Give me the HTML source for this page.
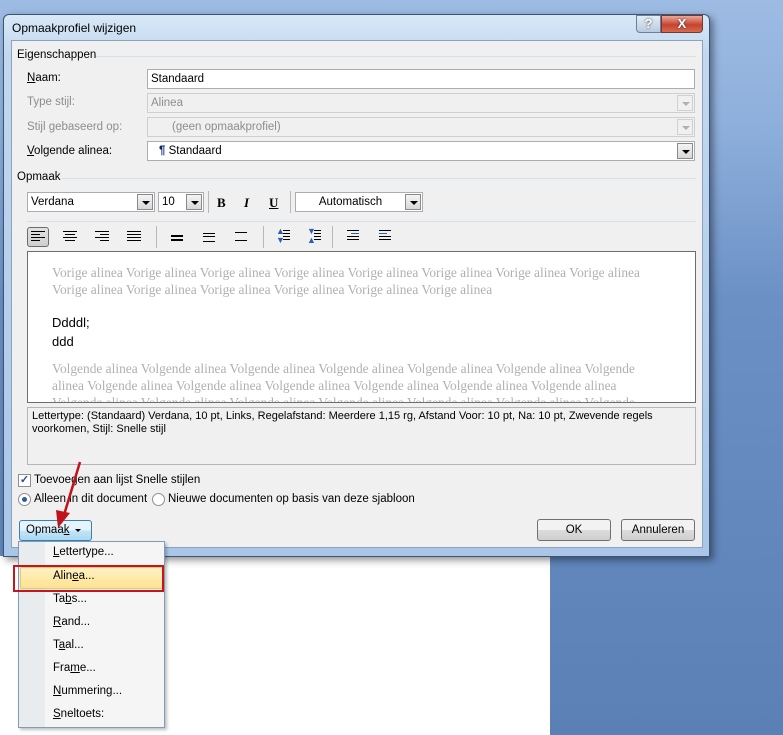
<!DOCTYPE html>
<html><head><meta charset="utf-8"><style>
*{box-sizing:border-box;margin:0;padding:0}
body{width:783px;height:735px;overflow:hidden;position:relative;font-family:"Liberation Sans",sans-serif;font-size:11.5px;color:#000;background:#5a80b6}
.a{position:absolute}
.t{position:absolute;white-space:nowrap}
.inp{position:absolute;background:#fff;border:1px solid #abadb3;height:20px;padding:3px 3px 0;white-space:nowrap}
.dis{background:#f0f0f0;border-color:#cfcfcf;color:#8d8d8d}
.dd{position:absolute;top:1px;right:1px;width:16px;height:16px;background:linear-gradient(#f4f4f4,#d8d8d8);border:1px solid #8a8a8a}
.dd:after{content:"";position:absolute;left:4px;top:6px;border-left:4px solid transparent;border-right:4px solid transparent;border-top:4px solid #000}
.dis .dd{background:#f0f0f0;border-color:#d0d0d0}
.dis .dd:after{border-top-color:#b0b0b0}
.g{color:#8d8d8d}
.btn{position:absolute;height:22px;border:1px solid #707070;border-radius:3px;background:linear-gradient(#f2f2f2 50%,#dcdcdc 50%,#cfcfcf);text-align:center;line-height:20px}
.al{position:absolute;width:14px}
.al i{display:block;height:1px;background:#000;margin-bottom:2px}
.sep{position:absolute;width:1px;background:#b8b8b8}
.pv{font-family:"Liberation Serif",serif;font-size:13.4px;color:#b0b0b0;line-height:17px}
.mi{position:absolute;left:53px;white-space:nowrap}
u{text-decoration:underline}
</style></head><body>
<div class="a" style="left:0;top:0;width:783px;height:735px;background:linear-gradient(180deg,#9dbbe3 0,#8fb0dc 120px,#6b90c5 300px,#5a80b6 735px)"></div>
<div class="a" style="left:0;top:556px;width:550px;height:179px;background:#fff"></div>
<div class="a" style="left:3px;top:14px;width:707px;height:543px;border-radius:6px 6px 0 0;background:linear-gradient(180deg,#d8e8f7,#c2d8ef 40px,#a9c6e8);border:1px solid #3d5573;box-shadow:3px 3px 8px rgba(0,0,0,.45)"></div>
<div class="t" style="left:12px;top:21px;font-size:12px">Opmaakprofiel wijzigen</div>
<div class="a" style="left:636px;top:15px;width:25px;height:18px;border:1px solid #6d7f96;border-radius:0 0 0 4px;background:linear-gradient(#e4edf7,#b9cadf);text-align:center;font-weight:bold;color:#fff;text-shadow:0 0 2px #333;font-size:13px;line-height:16px">?</div>
<div class="a" style="left:661px;top:15px;width:42px;height:18px;border:1px solid #6d3a3a;border-radius:0 0 4px 0;background:linear-gradient(#e9a99b,#c7432f 55%,#d86a4f);text-align:center;font-weight:bold;color:#fff;text-shadow:0 0 2px #333;font-size:13px;line-height:16px">X</div>
<div class="a" style="left:11px;top:40px;width:692px;height:508px;background:#f0f0f0;border:1px solid #8da2bd"></div>

<div class="t" style="left:17px;top:49px">Eigenschappen</div>
<div class="a" style="left:96px;top:56px;width:600px;height:1px;background:#d5dfe5"></div>
<div class="t" style="left:27px;top:72px"><u>N</u>aam:</div>
<div class="inp" style="left:147px;top:69px;width:548px">Standaard</div>
<div class="t g" style="left:27px;top:96px">Type stijl:</div>
<div class="inp dis" style="left:147px;top:93px;width:548px">Alinea<div class="dd"></div></div>
<div class="t g" style="left:27px;top:121px">Stijl gebaseerd op:</div>
<div class="inp dis" style="left:147px;top:117px;width:548px"><span style="padding-left:21px">(geen opmaakprofiel)</span><div class="dd"></div></div>
<div class="t" style="left:27px;top:145px"><u>V</u>olgende alinea:</div>
<div class="inp" style="left:147px;top:141px;width:548px"><b style="color:#0a246a;padding-left:8px">¶</b> Standaard<div class="dd"></div></div>

<div class="t" style="left:17px;top:171px">Opmaak</div>
<div class="a" style="left:62px;top:178px;width:634px;height:1px;background:#d5dfe5"></div>
<div class="inp" style="left:27px;top:192px;width:128px">Verdana<div class="dd"></div></div>
<div class="inp" style="left:158px;top:192px;width:46px">10<div class="dd"></div></div>
<div class="sep" style="left:208px;top:191px;height:22px"></div>
<div class="t" style="left:217px;top:195px;font-family:'Liberation Serif',serif;font-weight:bold;font-size:13px">B</div>
<div class="t" style="left:244px;top:195px;font-family:'Liberation Serif',serif;font-style:italic;font-weight:bold;font-size:13px">I</div>
<div class="t" style="left:269px;top:195px;font-family:'Liberation Serif',serif;font-weight:bold;font-size:13px;text-decoration:underline">U</div>
<div class="sep" style="left:290px;top:191px;height:22px"></div>
<div class="inp" style="left:295px;top:192px;width:128px;text-align:center;padding-right:20px">Automatisch<div class="dd"></div></div>
<div class="a" style="left:27px;top:221px;width:669px;height:1px;background:#d5dfe5"></div>

<div class="a" style="left:27px;top:227px;width:22px;height:20px;border:1px solid #6b6b6b;border-radius:3px;background:linear-gradient(#e2e2e2,#cfcfcf)"></div>
<div class="al" style="left:31px;top:231px"><i></i><i style="width:9px"></i><i></i><i style="width:9px"></i></div>
<div class="al" style="left:63px;top:231px"><i></i><i style="width:10px;margin-left:2px"></i><i></i><i style="width:10px;margin-left:2px"></i></div>
<div class="al" style="left:95px;top:231px"><i></i><i style="width:9px;margin-left:5px"></i><i></i><i style="width:9px;margin-left:5px"></i></div>
<div class="al" style="left:127px;top:231px"><i></i><i></i><i></i><i></i></div>
<div class="sep" style="left:156px;top:226px;height:22px"></div>
<div class="al" style="left:171px;top:235px;width:12px"><i style="height:2px"></i><i style="height:2px"></i></div>
<div class="al" style="left:203px;top:233px;width:12px"><i></i><i style="margin-bottom:4px"></i><i></i></div>
<div class="al" style="left:235px;top:232px;width:12px"><i style="margin-bottom:7px"></i><i></i></div>
<div class="sep" style="left:263px;top:226px;height:22px"></div>
<div class="t" style="left:276px;top:227px;font-size:9px;color:#2d5fb0;line-height:9px">▲<br>▼</div><div class="al" style="left:283px;top:230px;width:7px"><i></i><i></i><i></i><i></i></div>
<div class="t" style="left:307px;top:227px;font-size:9px;color:#2d5fb0;line-height:9px">▼<br>▲</div><div class="al" style="left:314px;top:230px;width:7px"><i></i><i></i><i></i><i></i></div>
<div class="sep" style="left:332px;top:226px;height:22px"></div>
<div class="al" style="left:347px;top:230px;width:12px"><i></i><i style="margin-left:4px;width:8px;background:#2d5fb0"></i><i></i><i></i></div>
<div class="al" style="left:379px;top:230px;width:12px"><i></i><i style="width:8px;background:#2d5fb0"></i><i></i><i></i></div>

<div class="a" style="left:27px;top:251px;width:669px;height:152px;background:#fff;border:1px solid #6d6d6d;overflow:hidden">
<div class="a pv" style="left:24px;top:12px;width:640px">Vorige alinea Vorige alinea Vorige alinea Vorige alinea Vorige alinea Vorige alinea Vorige alinea Vorige alinea<br>Vorige alinea Vorige alinea Vorige alinea Vorige alinea Vorige alinea Vorige alinea</div>
<div class="a" style="left:24px;top:61px;font-size:13px;line-height:19px">Ddddl;<br>ddd</div>
<div class="a pv" style="left:24px;top:108px;width:660px">Volgende alinea Volgende alinea Volgende alinea Volgende alinea Volgende alinea Volgende alinea Volgende<br>alinea Volgende alinea Volgende alinea Volgende alinea Volgende alinea Volgende alinea Volgende alinea<br>Volgende alinea Volgende alinea Volgende alinea Volgende alinea Volgende alinea Volgende alinea Volgende</div>
</div>
<div class="a" style="left:27px;top:407px;width:669px;height:58px;border:1px solid #b5b5b5;background:#f0f0f0;padding:2px 4px;line-height:13px;font-size:11px">Lettertype: (Standaard) Verdana, 10 pt, Links, Regelafstand: Meerdere 1,15 rg, Afstand Voor: 10 pt, Na: 10 pt, Zwevende regels<br>voorkomen, Stijl: Snelle stijl</div>

<div class="a" style="left:18px;top:474px;width:13px;height:13px;border:1px solid #8f8f8f;background:#fff;color:#2a4d8f;font-size:11px;line-height:11px;text-align:center;font-weight:bold">✓</div>
<div class="t" style="left:34px;top:474px">Toevoegen aan lijst Snelle stijlen</div>
<div class="a" style="left:18px;top:493px;width:13px;height:13px;border:1px solid #8f8f8f;border-radius:50%;background:#fff"><div class="a" style="left:3px;top:3px;width:5px;height:5px;border-radius:50%;background:#2f5a9c"></div></div>
<div class="t" style="left:34px;top:493px">Alleen in dit document</div>
<div class="a" style="left:152px;top:493px;width:13px;height:13px;border:1px solid #8f8f8f;border-radius:50%;background:#fff"></div>
<div class="t" style="left:168px;top:493px">Nieuwe documenten op basis van deze sjabloon</div>

<div class="a" style="left:19px;top:520px;width:73px;height:21px;border:1px solid #3c7fb1;border-radius:3px;background:linear-gradient(#e5f4fc 50%,#c4e5f6 50%,#a9d9f2)"></div>
<div class="t" style="left:26px;top:524px">Opmaa<u>k</u></div>
<div class="a" style="left:75px;top:529px;border-left:3px solid transparent;border-right:3px solid transparent;border-top:3px solid #000"></div>
<div class="btn" style="left:537px;top:519px;width:74px">OK</div>
<div class="btn" style="left:621px;top:519px;width:74px">Annuleren</div>

<div class="a" style="left:18px;top:541px;width:147px;height:187px;background:#f5f5f5;border:1px solid #7f9db9;box-shadow:2px 2px 3px rgba(0,0,0,.25)"></div>
<div class="a" style="left:19px;top:542px;width:26px;height:185px;background:#e8ecee"></div>
<div class="a" style="left:20px;top:567px;width:143px;height:22px;background:linear-gradient(#fff1c2,#fde28f);border:1px solid #e8c770;border-radius:2px"></div>
<div class="a" style="left:13px;top:565px;width:151px;height:27px;border:2px solid #c4161c"></div>
<div class="mi" style="top:546px"><u>L</u>ettertype...</div>
<div class="mi" style="top:570px">Alin<u>e</u>a...</div>
<div class="mi" style="top:593px">Ta<u>b</u>s...</div>
<div class="mi" style="top:616px"><u>R</u>and...</div>
<div class="mi" style="top:639px">T<u>a</u>al...</div>
<div class="mi" style="top:662px">Fra<u>m</u>e...</div>
<div class="mi" style="top:685px"><u>N</u>ummering...</div>
<div class="mi" style="top:708px"><u>S</u>neltoets:</div>

<svg class="a" style="left:0;top:0" width="783" height="735"><line x1="80" y1="462" x2="64" y2="515" stroke="#c0141a" stroke-width="2.5"/><polygon points="58,528 56,510 70,513" fill="#c0141a"/></svg>
</body></html>
